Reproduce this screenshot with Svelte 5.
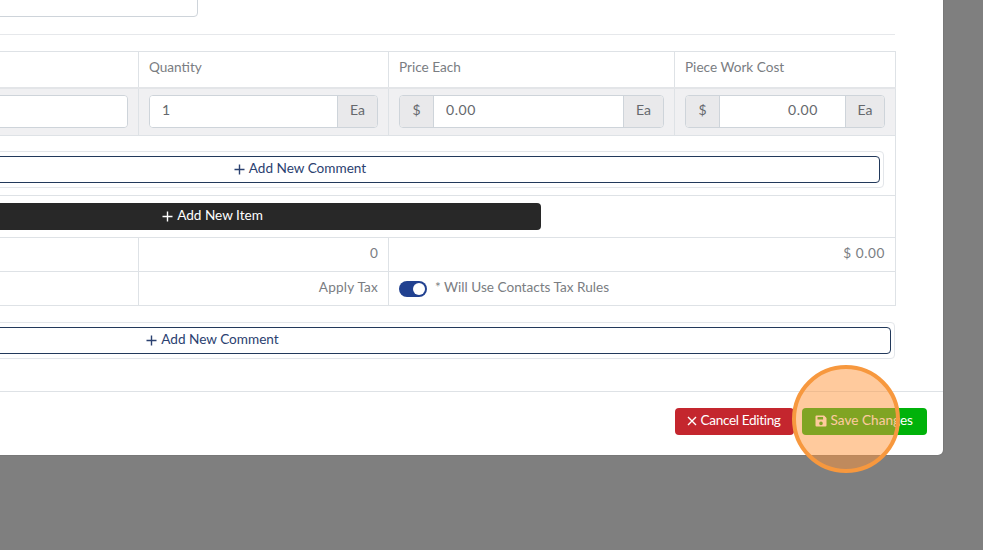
<script>
  const bars = ["Quantity", "Price Each", "Piece Work Cost"];
</script>

<div class="page">
  <div class="panel">
    <div class="content">
      <input class="top-field" type="text" readonly />
      <hr />
      <table>
        <colgroup>
          <col style="width: 175px" />
          <col style="width: 171px" />
          <col style="width: 263px" />
          <col style="width: 250px" />
          <col style="width: 286px" />
          <col style="width: 221px" />
        </colgroup>
        <tbody>
          <tr class="head">
            <th colspan="3"></th>
            {#each bars as label}
              <th>{label}</th>
            {/each}
          </tr>
          <tr class="item">
            <td colspan="3"><div class="group"><input type="text" readonly /></div></td>
            <td>
              <div class="group">
                <input class="qty" type="text" value="1" readonly />
                <span class="addon ea">Ea</span>
              </div>
            </td>
            <td>
              <div class="group">
                <span class="addon dollar">$</span>
                <input class="price" type="text" value="0.00" readonly />
                <span class="addon ea">Ea</span>
              </div>
            </td>
            <td>
              <div class="group">
                <span class="addon dollar">$</span>
                <input class="cost" type="text" value="0.00" readonly />
                <span class="addon ea last">Ea</span>
              </div>
            </td>
          </tr>
          <tr class="comment-row">
            <td></td>
            <td colspan="5" class="comment-cell">
              <div class="comment-box">
                <button class="outline">
                  <svg width="11" height="11" viewBox="0 0 11 11"><path d="M5.5 0.5v10M0.5 5.5h10" /></svg>
                  Add New Comment
                </button>
              </div>
            </td>
          </tr>
          <tr class="add-row">
            <td colspan="2"></td>
            <td colspan="4" class="add-cell">
              <button class="dark">
                <svg width="11" height="11" viewBox="0 0 11 11"><path d="M5.5 0.5v10M0.5 5.5h10" /></svg>
                Add New Item
              </button>
            </td>
          </tr>
          <tr class="total">
            <td colspan="3"></td>
            <td class="right">0</td>
            <td colspan="2" class="right amount">$ 0.00</td>
          </tr>
          <tr class="total">
            <td colspan="3"></td>
            <td class="right apply">Apply Tax</td>
            <td colspan="2">
              <div class="tax">
                <span class="toggle"><span class="knob"></span></span>
                <span class="tax-note">* Will Use Contacts Tax Rules</span>
              </div>
            </td>
          </tr>
        </tbody>
      </table>
      <div class="comment-box bottom">
        <button class="outline">
          <svg width="11" height="11" viewBox="0 0 11 11"><path d="M5.5 0.5v10M0.5 5.5h10" /></svg>
          Add New Comment
        </button>
      </div>
    </div>
    <div class="footer">
      <button class="cancel">
        <svg width="10" height="10" viewBox="0 0 10 10"><path d="M1 1l8 8M9 1l-8 8" /></svg>
        Cancel Editing
      </button>
      <button class="save">
        <svg class="disk" width="12" height="12" viewBox="0 0 12 12"><path d="M1.5 0.5h7.6l2.4 2.4v7.6a1 1 0 0 1-1 1h-9a1 1 0 0 1-1-1v-9a1 1 0 0 1 1-1zM2.5 2v2.6h5.6V2zM6 6.6a1.8 1.8 0 1 0 0 3.6a1.8 1.8 0 0 0 0-3.6z" fill-rule="evenodd" /></svg>
        Save Changes
      </button>
    </div>
  </div>
  <div class="spot"></div>
</div>

<style>
  :global(body) {
    background: #7f7f7f;
  }

  .page {
    position: relative;
    width: 983px;
    height: 550px;
    overflow: hidden;
    background: #7f7f7f;
    font-family: "Lato", sans-serif;
    font-size: 13.6px;
    color: #7a7d82;
  }

  .panel {
    width: 1433px;
    margin: -40px 0 0 -490px;
    background: #fff;
    border-radius: 5px;
    box-shadow: 0 0 1px rgba(0, 0, 0, 0.5);
  }

  .content {
    padding: 24px 48px 32px 19px;
  }

  .top-field {
    display: block;
    box-sizing: border-box;
    width: 669px;
    height: 33px;
    border: 1px solid #ced4da;
    border-radius: 4px;
    background: #fff;
  }

  hr {
    height: 1px;
    margin: 17px 0 16px;
    border: 0;
    background: #e6e8eb;
  }

  table {
    width: 1366px;
    table-layout: fixed;
    border-collapse: collapse;
    border: 1px solid #dee2e6;
  }

  th,
  td {
    box-sizing: border-box;
    padding: 0 10px;
    border: 1px solid #dee2e6;
    font-weight: 400;
    text-align: left;
  }

  .head th {
    height: 36px;
    padding-bottom: 4px;
    border-bottom: 2px solid #e3e5e8;
  }

  .item td {
    height: 48px;
    background: #f0f0f2;
  }

  .group {
    display: flex;
    height: 33px;
    box-sizing: border-box;
    border: 1px solid #ced4da;
    border-radius: 4px;
    overflow: hidden;
    background: #fff;
  }

  input {
    font: inherit;
    font-size: 14px;
    color: #65686d;
    outline: none;
  }

  .group input {
    flex: 1;
    min-width: 0;
    border: 0;
    padding: 0 12px 4px;
    letter-spacing: 0.6px;
    background: #fff;
  }

  .group .cost {
    padding-right: 27px;
    text-align: right;
  }

  .addon {
    display: flex;
    align-items: center;
    justify-content: center;
    flex: none;
    padding-bottom: 4px;
    background: #e9e9eb;
    color: #65686d;
    font-size: 14px;
  }

  .ea {
    width: 39px;
    border-left: 1px solid #ced4da;
  }

  .ea.last {
    width: 38px;
  }

  .dollar {
    width: 33px;
    border-right: 1px solid #ced4da;
  }

  .comment-cell {
    height: 60px;
    padding-top: 8px;
    padding-right: 11px;
    vertical-align: middle;
  }

  .comment-box {
    box-sizing: border-box;
    padding: 4px 3px 4px 4px;
    border: 1px solid #e3e6ea;
    border-radius: 4px;
  }

  .comment-box.bottom {
    margin-top: 16px;
  }

  button {
    display: inline-flex;
    align-items: center;
    justify-content: center;
    gap: 4px;
    box-sizing: border-box;
    height: 27px;
    padding: 0 13px 4px;
    border: 1px solid transparent;
    border-radius: 4px;
    font: inherit;
    white-space: nowrap;
  }

  button svg {
    margin-top: 3px;
  }

  svg path {
    fill: none;
    stroke: currentColor;
    stroke-width: 1.4;
  }

  svg.disk path {
    fill: currentColor;
    stroke: none;
  }

  .outline {
    width: 100%;
    background: #fff;
    border-color: #22395b;
    color: #2b4170;
  }

  .add-row td {
    height: 42px;
  }

  .add-cell {
    padding: 0 8px;
  }

  .dark {
    width: 657px;
    background: #282828;
    color: #fff;
  }

  .total td {
    height: 34px;
    padding-bottom: 3px;
  }

  .right {
    text-align: right;
  }

  .amount {
    letter-spacing: 0.6px;
  }

  .apply {
    letter-spacing: 0.2px;
  }

  .tax {
    display: flex;
    align-items: center;
    gap: 8px;
  }

  .tax-note {
    margin-top: -1px;
  }

  .toggle {
    display: flex;
    justify-content: flex-end;
    align-items: center;
    width: 28px;
    height: 16px;
    margin-top: 3px;
    padding: 0 2px;
    box-sizing: border-box;
    border-radius: 8px;
    background: #214190;
  }

  .knob {
    width: 12px;
    height: 12px;
    border-radius: 50%;
    background: #fff;
  }

  .footer {
    display: flex;
    justify-content: flex-end;
    gap: 8px;
    padding: 16px 16px 20px;
    border-top: 1px solid #dee2e6;
  }

  .cancel {
    padding: 0 12px 4px 11px;
    background: #c4262e;
    color: #fff;
    letter-spacing: -0.35px;
  }

  .save {
    padding: 0 13px 4px 12px;
    background: #00b20a;
    color: #fff;
  }

  .spot {
    position: absolute;
    left: 792px;
    top: 365px;
    box-sizing: border-box;
    width: 108px;
    height: 108px;
    border: 4px solid #f7983e;
    border-radius: 50%;
    background: rgba(255, 150, 60, 0.5);
  }
</style>
